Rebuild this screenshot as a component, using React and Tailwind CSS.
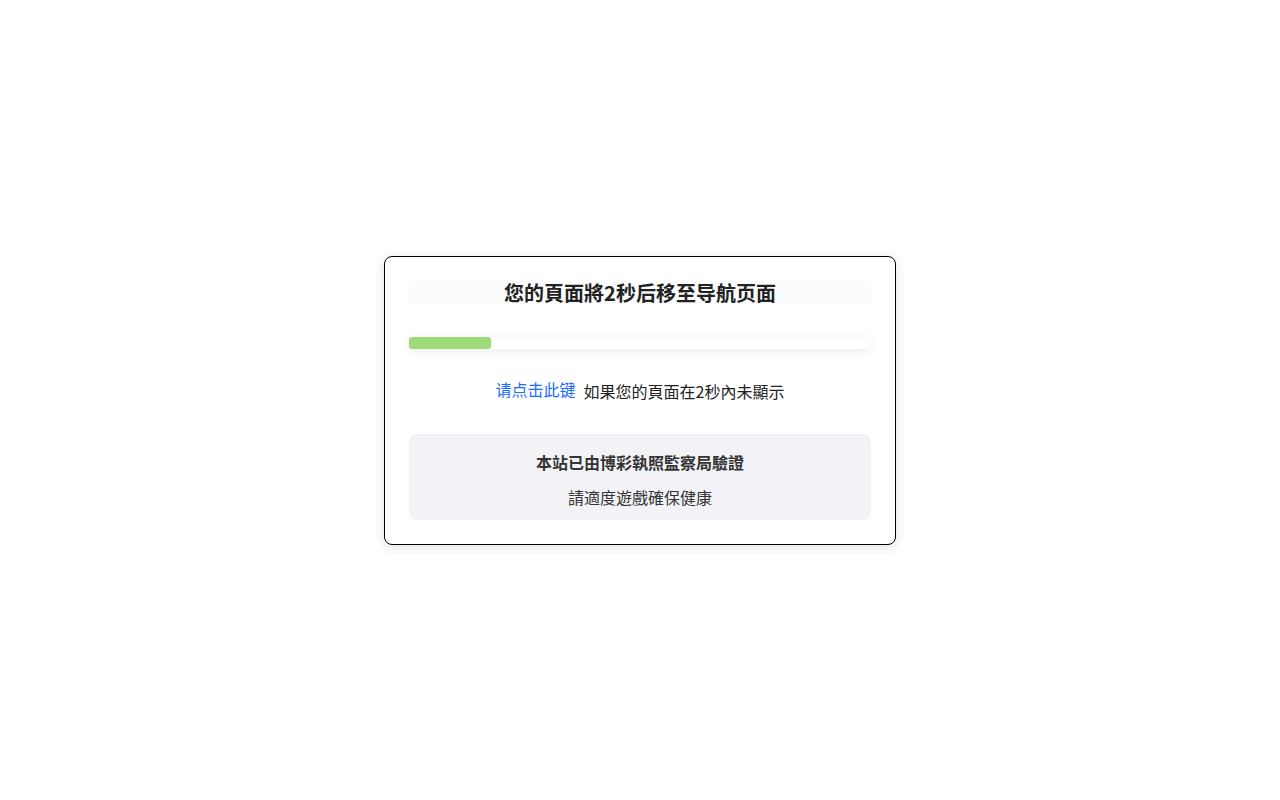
export default function App() {
  return (
    <div
      className="flex h-screen w-full items-center justify-center bg-white"
      style={{ fontFamily: '"Noto Sans CJK SC", "Noto Sans CJK TC", "Noto Sans", sans-serif' }}
    >
      <div className="flex w-[512px] flex-col rounded-lg border border-black bg-white p-6 shadow-[0_2px_12px_rgba(0,0,0,0.12)]">
        {/* title */}
        <div className="bg-[#fcfcfc] text-center text-[20px] font-bold leading-6 text-[#222]">
          您的頁面將2秒后移至导航页面
        </div>

        {/* progress */}
        <div className="mt-8 h-3 w-full rounded bg-white shadow-[0_2px_8px_rgba(0,0,0,0.08)]">
          <div className="h-3 w-[82px] rounded-[3px] bg-[#9ddb7a]" />
        </div>

        <div className="mt-[30px] flex justify-center gap-2 text-[16px] leading-6">
          <a href="#" className="-mt-[2px] text-[#1a6cff]">
            请点击此键
          </a>
          <span className="text-[#222]">如果您的頁面在2秒內未顯示</span>
        </div>

        {/* notice */}
        <div className="mt-[31px] flex flex-col items-center gap-[11px] rounded-lg bg-[#f3f3f7] pb-[11px] pt-[16px] text-[16px] leading-6 text-[#333]">
          <div className="font-bold">本站已由博彩執照監察局驗證</div>
          <div>請適度遊戲確保健康</div>
        </div>
      </div>
    </div>
  );
}
